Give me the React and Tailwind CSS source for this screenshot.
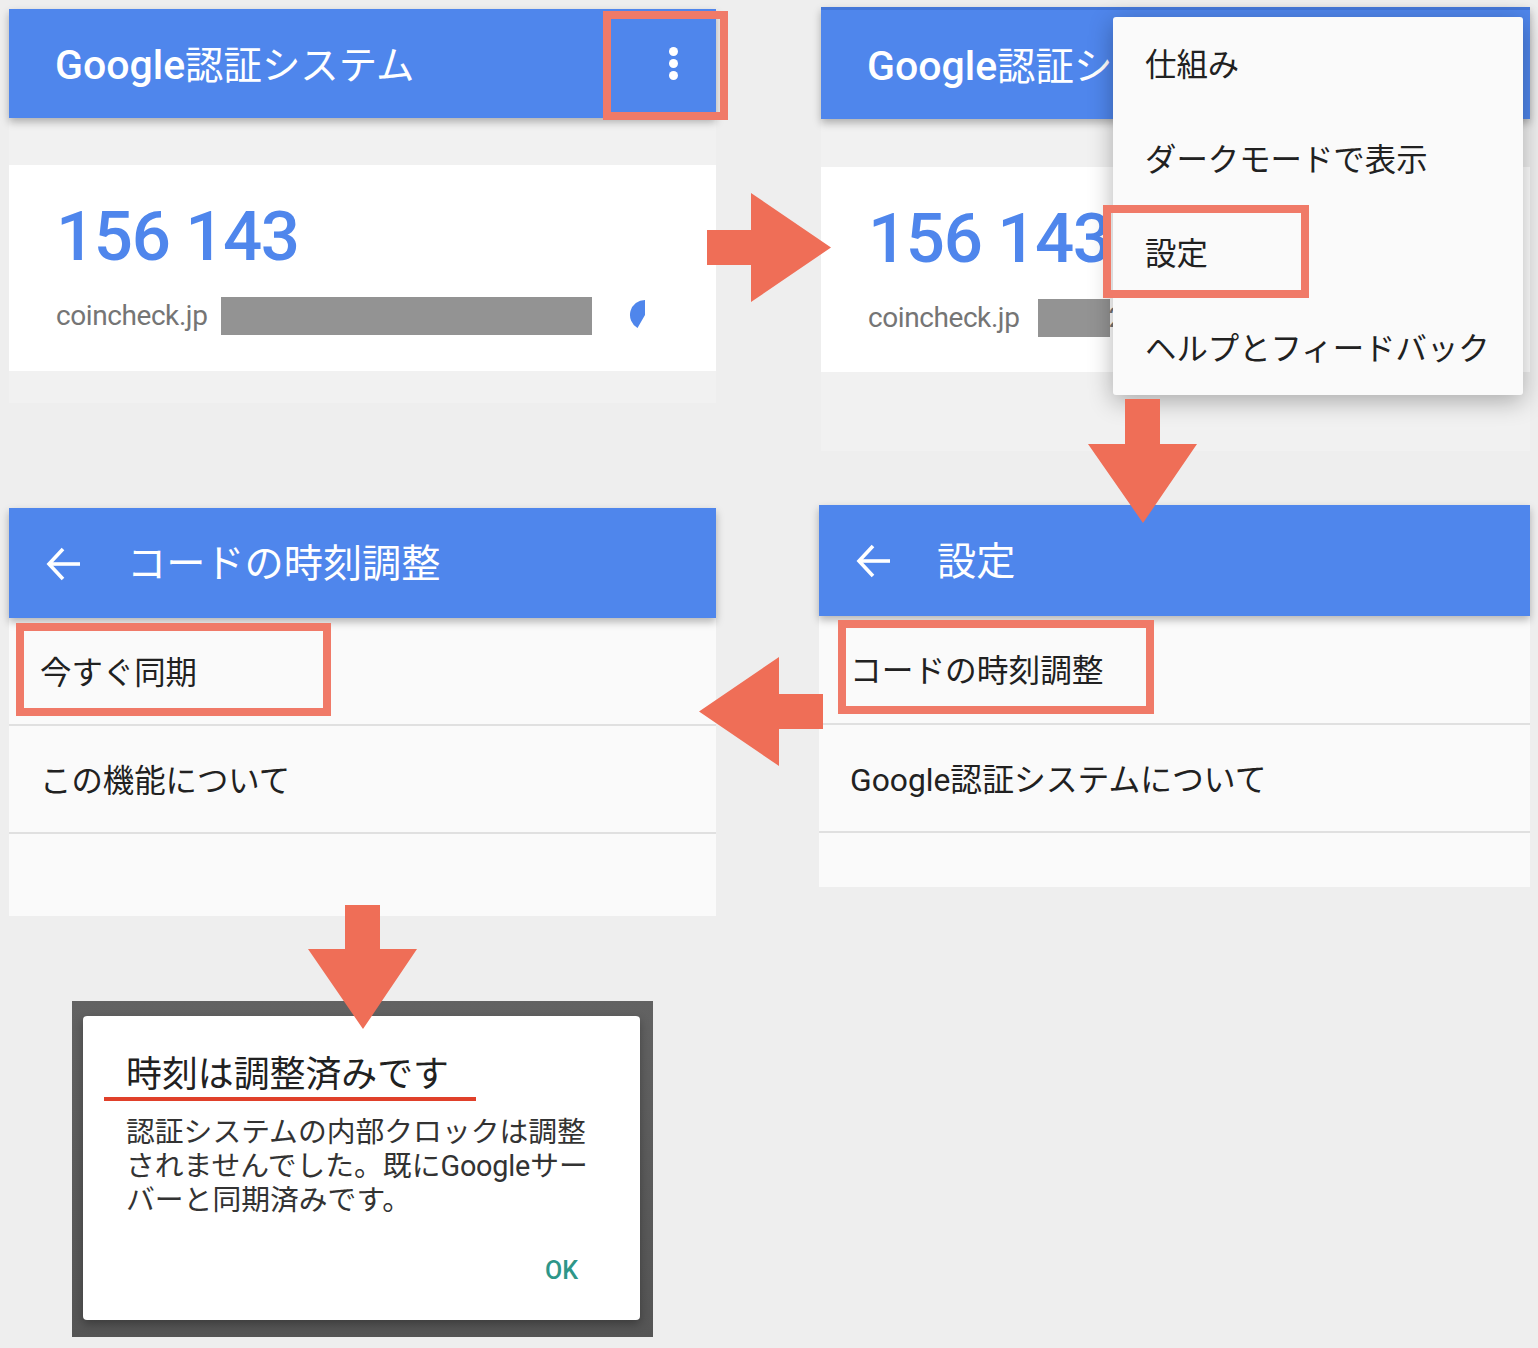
import React from "react";

// Shared top bar of the app screens
function AppBar({ title, back, className = "" }) {
  return (
    <div className={`relative z-10 flex items-center bg-[#4f86ec] text-white shadow-[0_4px_8px_rgba(0,0,0,0.28)] ${className}`}>
      {back && (
        <svg className="ml-[37px] mr-[46px] mt-[1px] shrink-0" width="35" height="34" viewBox="0 0 35 34" fill="none" stroke="white" strokeWidth="3.6">
          <path d="M34 17H4" />
          <path d="M17 2L3 17L17 32" />
        </svg>
      )}
      <h1 className={`pt-[4px] text-[39.2px] leading-none font-normal ${back ? "" : "pl-[46px]"}`}>{title}</h1>
    </div>
  );
}

function GoogleTitle() {
  return (
    <span className="text-[38.4px]">
      <span className="text-[41px] font-medium">Google</span>認証システム
    </span>
  );
}

function CodeCard({ className = "", children }) {
  return (
    <div className={`bg-white pl-[47px] ${className}`}>
      <div className="pt-[34px] text-[69px] leading-[76px] font-medium tracking-[-1.4px] text-[#4f86ec]">156 143</div>
      <div className="mt-[22px] flex items-center">
        <span className="text-[28px] leading-[38px] tracking-[-0.42px] text-[#757575]">coincheck.jp</span>
        {children}
      </div>
    </div>
  );
}

function SettingRow({ label, className = "" }) {
  return (
    <div className={`flex items-center border-b-2 border-[#e0e0e0] pl-[31px] pt-[5px] leading-none text-[#212121] ${className}`}>
      {label}
    </div>
  );
}

function Highlight({ className }) {
  return <div className={`absolute z-30 border-8 border-[#f07a68] ${className}`} />;
}

function MenuItem({ label }) {
  return <li className="flex h-[94.4px] items-center pl-[32px] pt-[2px] text-[31.4px] leading-none text-[#212121]">{label}</li>;
}

export default function App() {
  return (
    <div className="relative flex h-[1348px] w-[1538px] overflow-hidden bg-[#eeeeee] font-['Roboto','Noto_Sans_CJK_JP',sans-serif]">
      {/* Left column */}
      <div className="ml-[9px] w-[707px] shrink-0 pt-[9px]">
        <section className="flex h-[394px] flex-col bg-[#f1f1f1]">
          <AppBar title={<GoogleTitle />} className="h-[109px] justify-between pr-[39px]" />
          <CodeCard className="mt-[47px] h-[206px]">
            <div className="ml-[14px] h-[38px] w-[371px] bg-[#939393]" />
            <svg className="ml-[37px] -mt-[2px]" width="16" height="30" viewBox="0 0 16 30">
              <path d="M16 0A15 15 0 0 0 8.5 28L16 15Z" fill="#4f86ec" />
            </svg>
          </CodeCard>
        </section>

        <section className="mt-[105px] flex h-[408px] flex-col bg-[#fafafa]">
          <AppBar back title="コードの時刻調整" className="h-[110px]" />
          <SettingRow label="今すぐ同期" className="h-[108px] text-[31.4px]" />
          <SettingRow label="この機能について" className="h-[108px] text-[31.4px]" />
        </section>

        {/* Dialog over dimmed screen */}
        <section className="ml-[63px] mt-[85px] h-[336px] w-[581px] bg-gradient-to-b from-[#626262] to-[#555555] pl-[11px] pt-[15px]">
          <div className="flex h-[304px] w-[557px] flex-col rounded-[4px] bg-white pl-[43px] pt-[38px] shadow-[0_4px_10px_rgba(0,0,0,0.3)]">
            <h2 className="text-[35.9px] leading-[42px] font-normal text-[#212121]">時刻は調整済みです</h2>
            <div className="-ml-[22px] mt-[1px] h-[4px] w-[372px] bg-[#e0402a]" />
            <p className="mt-[14px] text-[28.8px] leading-[34px] text-[#333333]">
              認証システムの内部クロックは調整
              <br />
              されませんでした。既に<span className="tracking-[-0.2px]">Google</span>サー
              <br />
              バーと同期済みです。
            </p>
            <div className="mt-[39px] pl-[419px] text-[25px] leading-[30px] font-medium text-[#2e9688]">OK</div>
          </div>
        </section>
      </div>

      {/* Right column */}
      <div className="ml-[103px] w-[711px] shrink-0 pt-[7px]">
        <section className="ml-[2px] flex h-[444px] w-[709px] flex-col bg-[#f1f1f1]">
          <AppBar title={<GoogleTitle />} className="h-[112px] border-t-[3px] border-[#4477d8]" />
          <CodeCard className="mt-[48px] h-[205px]">
            <div className="ml-[19px] h-[38px] w-[72px] bg-[#939393]" />
            <span className="-ml-[2px] text-[28px] leading-[38px] text-[#757575]">2</span>
          </CodeCard>
        </section>

        <section className="mt-[54px] flex h-[382px] flex-col bg-[#fafafa]">
          <AppBar back title="設定" className="h-[111px]" />
          <SettingRow label="コードの時刻調整" className="h-[109px] text-[31.7px]" />
          <SettingRow label="Google認証システムについて" className="h-[108px] text-[31.8px]" />
        </section>
      </div>

      {/* Three-dot button on the first screen */}
      <div className="absolute left-[669px] top-[47px] z-20 flex flex-col gap-[3px]">
        <span className="h-[9px] w-[9px] rounded-full bg-white" />
        <span className="h-[9px] w-[9px] rounded-full bg-white" />
        <span className="h-[9px] w-[9px] rounded-full bg-white" />
      </div>

      {/* Open overflow menu */}
      <ul className="absolute left-[1113px] top-[17px] z-20 h-[378px] w-[410px] rounded-[3px] bg-[#fafafa] pt-[1px] shadow-[0_6px_24px_rgba(0,0,0,0.3)]">
        <MenuItem label="仕組み" />
        <MenuItem label="ダークモードで表示" />
        <MenuItem label="設定" />
        <MenuItem label="ヘルプとフィードバック" />
      </ul>

      {/* Red highlight boxes */}
      <Highlight className="left-[603px] top-[11px] h-[109px] w-[125px]" />
      <Highlight className="left-[1103px] top-[205px] h-[93px] w-[206px]" />
      <Highlight className="left-[16px] top-[623px] h-[93px] w-[315px]" />
      <Highlight className="left-[838px] top-[620px] h-[94px] w-[316px]" />

      {/* Flow arrows */}
      <svg className="absolute left-[707px] top-[193px] z-40" width="124" height="109" viewBox="0 0 124 109">
        <path d="M0 37H44V0L124 54.5L44 109V72H0Z" fill="#ef6e57" />
      </svg>
      <svg className="absolute left-[1088px] top-[399px] z-40" width="109" height="124" viewBox="0 0 109 124">
        <path d="M37 0H72V45H109L55 124L0 45H37Z" fill="#ef6e57" />
      </svg>
      <svg className="absolute left-[699px] top-[657px] z-40" width="124" height="109" viewBox="0 0 124 109">
        <path d="M124 37H80V0L0 54.5L80 109V72H124Z" fill="#ef6e57" />
      </svg>
      <svg className="absolute left-[308px] top-[905px] z-40" width="109" height="124" viewBox="0 0 109 124">
        <path d="M37 0H72V44H109L55 124L0 44H37Z" fill="#ef6e57" />
      </svg>
    </div>
  );
}
